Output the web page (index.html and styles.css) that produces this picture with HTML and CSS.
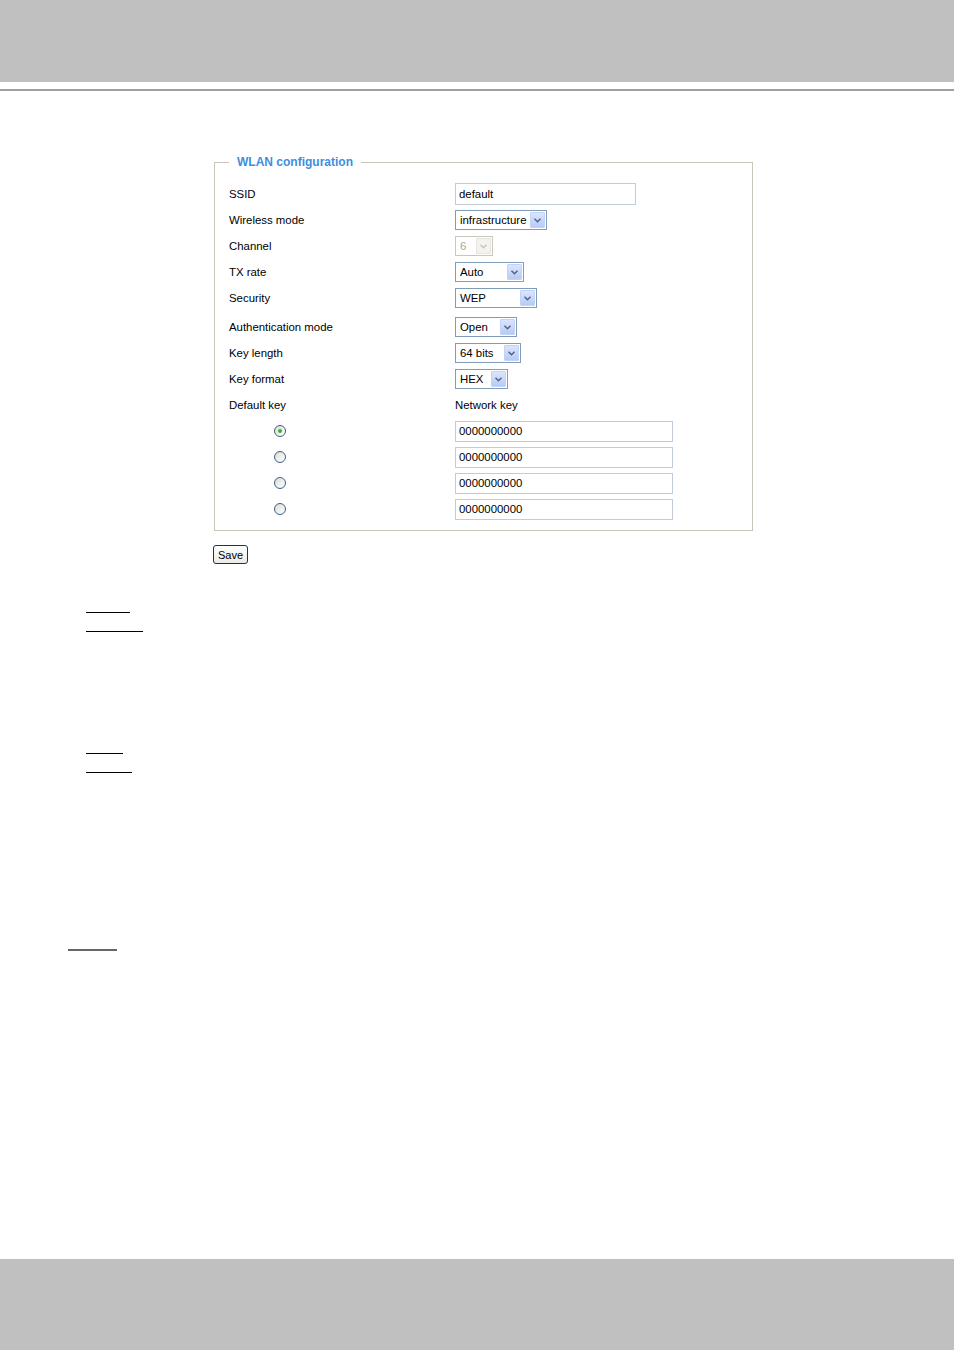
FILE: index.html
```html
<!DOCTYPE html>
<html lang="en">
<head>
  <meta charset="UTF-8" />
  <title>WLAN configuration</title>
  <link rel="stylesheet" href="styles.css">
</head>
<body>
  <div class="page">
    <header class="top-band"></header>
    <div class="top-rule"></div>

    <main class="content">
      <fieldset class="wlan">
        <legend>WLAN configuration</legend>

        <div class="row">
          <span class="label">SSID</span>
          <span class="text-input ssid">default</span>
        </div>
        <div class="row">
          <span class="label">Wireless mode</span>
          <span class="select w-mode"><span class="select-text">infrastructure</span><span class="select-btn"><svg width="7" height="5" viewBox="0 0 7 5"><polyline points="0.5,0.8 3.5,3.8 6.5,0.8" fill="none" stroke="#4d6185" stroke-width="1.4"/></svg></span></span>
        </div>
        <div class="row">
          <span class="label">Channel</span>
          <span class="select disabled w-channel"><span class="select-text">6</span><span class="select-btn"><svg width="7" height="5" viewBox="0 0 7 5"><polyline points="0.5,0.8 3.5,3.8 6.5,0.8" fill="none" stroke="#c9c7ba" stroke-width="1.4"/></svg></span></span>
        </div>
        <div class="row">
          <span class="label">TX rate</span>
          <span class="select w-tx"><span class="select-text">Auto</span><span class="select-btn"><svg width="7" height="5" viewBox="0 0 7 5"><polyline points="0.5,0.8 3.5,3.8 6.5,0.8" fill="none" stroke="#4d6185" stroke-width="1.4"/></svg></span></span>
        </div>
        <div class="row">
          <span class="label">Security</span>
          <span class="select w-sec"><span class="select-text">WEP</span><span class="select-btn"><svg width="7" height="5" viewBox="0 0 7 5"><polyline points="0.5,0.8 3.5,3.8 6.5,0.8" fill="none" stroke="#4d6185" stroke-width="1.4"/></svg></span></span>
        </div>
        <div class="row spaced">
          <span class="label">Authentication mode</span>
          <span class="select w-auth"><span class="select-text">Open</span><span class="select-btn"><svg width="7" height="5" viewBox="0 0 7 5"><polyline points="0.5,0.8 3.5,3.8 6.5,0.8" fill="none" stroke="#4d6185" stroke-width="1.4"/></svg></span></span>
        </div>
        <div class="row">
          <span class="label">Key length</span>
          <span class="select w-len"><span class="select-text">64 bits</span><span class="select-btn"><svg width="7" height="5" viewBox="0 0 7 5"><polyline points="0.5,0.8 3.5,3.8 6.5,0.8" fill="none" stroke="#4d6185" stroke-width="1.4"/></svg></span></span>
        </div>
        <div class="row">
          <span class="label">Key format</span>
          <span class="select w-fmt"><span class="select-text">HEX</span><span class="select-btn"><svg width="7" height="5" viewBox="0 0 7 5"><polyline points="0.5,0.8 3.5,3.8 6.5,0.8" fill="none" stroke="#4d6185" stroke-width="1.4"/></svg></span></span>
        </div>
        <div class="row">
          <span class="label">Default key</span>
          <span>Network key</span>
        </div>
        <div class="row">
          <span class="label"><span class="radio checked"></span></span>
          <span class="text-input key">0000000000</span>
        </div>
        <div class="row">
          <span class="label"><span class="radio"></span></span>
          <span class="text-input key">0000000000</span>
        </div>
        <div class="row">
          <span class="label"><span class="radio"></span></span>
          <span class="text-input key">0000000000</span>
        </div>
        <div class="row">
          <span class="label"><span class="radio"></span></span>
          <span class="text-input key">0000000000</span>
        </div>
      </fieldset>

      <button class="save">Save</button>
    </main>

    <section class="notes">
      <div class="uline u1"></div>
      <div class="uline u2"></div>
      <div class="uline u3"></div>
      <div class="uline u4"></div>
      <div class="uline u5"></div>
    </section>

    <footer class="bottom-band"></footer>
  </div>
</body>
</html>
```

FILE: styles.css
```css
* {
  box-sizing: border-box;
}

body {
  margin: 0;
  padding: 0;
  background: #fff;
  font-family: 'Liberation Sans', Arial, sans-serif;
  font-size: 11.4px;
  color: #000;
}

.page {
  min-height: 1350px;
  display: flex;
  flex-direction: column;
}

.top-band {
  height: 82px;
  background: #bfc0bf;
}

.top-rule {
  margin-top: 7px;
  height: 2px;
  background: #a0a0a0;
}

.content {
  padding: 64px 0 0 213px;
}

.wlan {
  margin: 0 0 0 1px;
  width: 539px;
  border: 1px solid #c8c5b9;
  padding: 11px 0 8px 14px;
}

.wlan legend {
  padding: 0 8px;
  line-height: 15px;
  color: #3d8ee2;
  font-weight: bold;
  font-size: 12px;
}

.row {
  display: flex;
  align-items: center;
  height: 26px;
}

.row.spaced {
  margin-top: 3px;
}

.label {
  width: 226px;
  flex-shrink: 0;
}

.text-input {
  display: flex;
  align-items: center;
  border: 1px solid #c2cbd8;
  padding-left: 3px;
  background: #fff;
}

.text-input.ssid {
  width: 181px;
  height: 22px;
}

.text-input.key {
  width: 218px;
  height: 21px;
}

.select {
  display: flex;
  align-items: stretch;
  height: 20px;
  border: 1px solid #7f9db9;
  background: #fff;
}

.select-text {
  flex: 1;
  display: flex;
  align-items: center;
  padding-left: 4px;
  white-space: nowrap;
}

.select-btn {
  width: 15px;
  margin: 1px;
  display: flex;
  align-items: center;
  justify-content: center;
  background: linear-gradient(#dbe5fd, #b7cbf6);
  border: 1px solid #c3d3f8;
  border-radius: 1px;
}

.select.disabled {
  border-color: #c9c7ba;
  color: #aca899;
}

.select.disabled .select-btn {
  background: #f4f3ee;
  border-color: #e6e4dc;
}

.w-mode { width: 92px; }
.w-channel { width: 38px; }
.w-tx { width: 69px; }
.w-sec { width: 82px; }
.w-auth { width: 62px; }
.w-len { width: 66px; }
.w-fmt { width: 53px; }

.radio {
  display: block;
  margin-left: 45px;
  width: 12px;
  height: 12px;
  border-radius: 50%;
  border: 1px solid #3c5f86;
  background: linear-gradient(135deg, #dcdcd6, #fff);
  position: relative;
}

.radio.checked::after {
  content: '';
  position: absolute;
  left: 3px;
  top: 3px;
  width: 4px;
  height: 4px;
  border-radius: 50%;
  background: #32b432;
}

.save {
  display: block;
  margin-top: 14px;
  width: 35px;
  height: 19px;
  padding: 0;
  font-family: 'Liberation Sans', Arial, sans-serif;
  font-size: 11px;
  color: #000;
  border: 1px solid #003c74;
  border-radius: 3px;
  background: linear-gradient(#fff, #ecebe6);
}

.notes {
  padding-top: 48px;
}

.uline {
  height: 1px;
  background: #000;
  margin-left: 86px;
}

.u1 { width: 44px; }
.u2 { width: 57px; margin-top: 18px; }
.u3 { width: 37px; margin-top: 121px; }
.u4 { width: 46px; margin-top: 18px; }
.u5 {
  width: 49px;
  height: 2px;
  margin-top: 176px;
  margin-left: 68px;
  background: #666;
}

.bottom-band {
  margin-top: auto;
  height: 91px;
  background: #bfc0bf;
}
```
